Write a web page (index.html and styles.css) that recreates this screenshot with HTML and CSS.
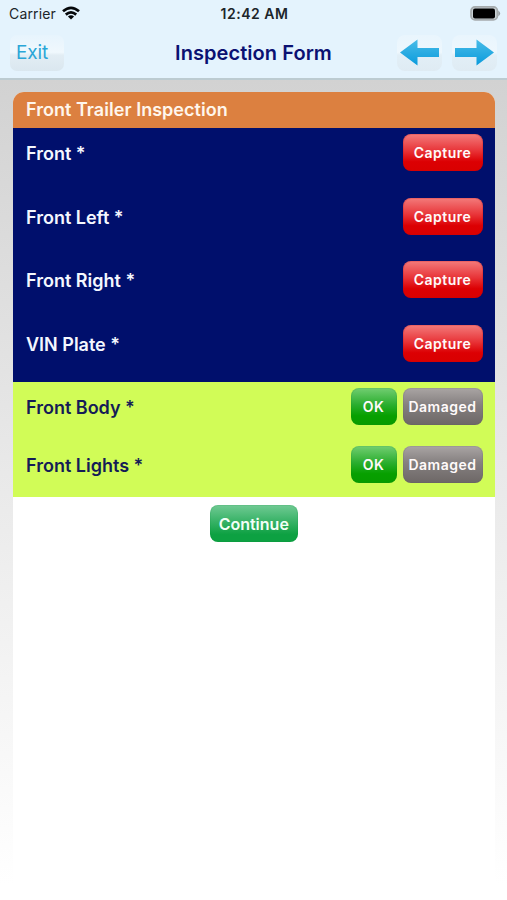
FILE: index.html
```html
<!DOCTYPE html>
<html lang="en">
<head>
<meta charset="utf-8">
<title>Inspection Form</title>
<link rel="stylesheet" href="styles.css">
</head>
<body>
<header class="top">
  <div class="status">
    <div class="carrier"><span>Carrier</span>
      <svg width="18" height="14" viewBox="0 0 18 14" fill="none" stroke="#05070a" stroke-width="2.7"><path d="M1 5.3Q9-1.7 17 5.3M3.8 8.6Q9 4.2 14.2 8.6"/><path d="M9 13.6 5.9 10.6Q9 8 12.1 10.6Z" fill="#05070a" stroke="none"/></svg>
    </div>
    <div class="clock">12:42 AM</div>
    <div class="battery">
      <svg width="31" height="15" viewBox="0 0 31 15"><rect x="1" y=".9" width="26.4" height="13" rx="4" fill="#c9d1d4" stroke="#a5abad" stroke-width="1.7"/><rect x="3" y="2.6" width="22" height="9.8" rx="2" fill="#000"/><path d="M28.3 4.5Q32 7.4 28.3 10.3Z" fill="#989fa2"/></svg>
    </div>
  </div>
  <nav class="nav">
    <button class="exit">Exit</button>
    <h1 class="title">Inspection Form</h1>
    <div class="arrows">
      <button class="arrow" aria-label="Previous"><svg width="45" height="36" viewBox="0 0 45 36"><defs><linearGradient id="blue" x2="0" y2="1"><stop stop-color="#4abce8"/><stop offset="1" stop-color="#0a9bdc"/></linearGradient></defs><path d="M3 17.5 20.5 4.5V13H42V22H20.5V30.5Z" fill="url(#blue)"/></svg></button>
      <button class="arrow" aria-label="Next"><svg width="45" height="36" viewBox="0 0 45 36"><path d="M42 17.5 24.5 4.5V13H3V22H24.5V30.5Z" fill="url(#blue)"/></svg></button>
    </div>
  </nav>
</header>
<main class="page">
  <section class="card">
    <h2 class="heading">Front Trailer Inspection</h2>
    <div class="photos">
      <div class="row"><span class="label">Front *</span><button class="btn red">Capture</button></div>
      <div class="row"><span class="label">Front Left *</span><button class="btn red">Capture</button></div>
      <div class="row"><span class="label">Front Right *</span><button class="btn red">Capture</button></div>
      <div class="row"><span class="label">VIN Plate *</span><button class="btn red">Capture</button></div>
    </div>
    <div class="checks">
      <div class="row"><span class="label">Front Body *</span><button class="btn green">OK</button><button class="btn gray">Damaged</button></div>
      <div class="row"><span class="label">Front Lights *</span><button class="btn green">OK</button><button class="btn gray">Damaged</button></div>
    </div>
    <button class="btn continue">Continue</button>
  </section>
</main>
</body>
</html>
```
FILE: styles.css
```css
* { box-sizing: border-box; }
body {
  margin: 0;
  height: 900px;
  display: flex;
  flex-direction: column;
  overflow: hidden;
  font-family: Inter, "Liberation Sans", sans-serif;
}
button { border: 0; margin: 0; padding: 0; font-family: inherit; }
h1, h2 { margin: 0; }
.top {
  height: 80px;
  flex: none;
  background: #e4f3fd;
  border-bottom: 2px solid #bccbd1;
}
.status {
  height: 27px;
  display: grid;
  grid-template-columns: 1fr auto 1fr;
  align-items: center;
  padding: 0 7px 0 9px;
  color: #1c252a;
  font-size: 14px;
}
.carrier { display: flex; align-items: center; gap: 6px; letter-spacing: .15px; }
.carrier svg { margin-top: -1px; }
.clock { font-weight: 600; letter-spacing: .5px; }
.battery { display: flex; justify-content: flex-end; }
.battery svg { display: block; margin: -1px -1px 0 0; }
.nav {
  height: 51px;
  display: grid;
  grid-template-columns: 1fr auto 1fr;
  align-items: center;
  padding: 0 10px;
}
.exit {
  width: 54px;
  height: 36px;
  padding-left: 6px;
  text-align: left;
  border-radius: 7px;
  background: linear-gradient(#e7f4fd, #f0f8fd 48%, #e2edf4 56%, #dae7ef);
  color: #2aa6d7;
  font-size: 19px;
  letter-spacing: -.1px;
}
.title { color: #0a1172; font-size: 20px; font-weight: 600; line-height: 28px; letter-spacing: .06px; }
.arrows { display: flex; justify-content: flex-end; gap: 10px; }
.arrow {
  width: 45px;
  height: 36px;
  border-radius: 8px;
  background: linear-gradient(#e9f5fd, #eef7fd 48%, #e2eff7 56%, #dfebf3);
}
.arrow svg { display: block; }
.page {
  flex: 1;
  min-height: 0;
  padding: 11.5px 12.5px 0 13px;
  background: linear-gradient(#d2d2d2, #e9e9e9 48%, #fff 98%);
}
.card {
  height: 100%;
  border-radius: 11px 11px 0 0;
  overflow: hidden;
  background: #fff;
}
.heading {
  height: 36.5px;
  padding-left: 13px;
  background: #dc8040;
  color: #fff6ec;
  font-size: 18px;
  font-weight: 600;
  line-height: 36px;
  letter-spacing: .03px;
}
.photos { background: #000f6c; color: #f4f7ff; }
.checks { background: #d1fc57; color: #151c56; }
.row {
  display: flex;
  align-items: flex-start;
  gap: 6px;
  padding: 6px 12px 0 13px;
}
.photos .row { height: 63.5px; }
.checks .row { height: 57.5px; }
.label { flex: 1; font-size: 18px; font-weight: 600; line-height: 40px; }
.btn {
  height: 37px;
  border-radius: 8px;
  color: #fffafa;
  font-size: 14px;
  font-weight: 600;
  letter-spacing: .5px;
}
.red { width: 80px; background: linear-gradient(#f37b7b, #e83438 45%, #dc0003 75%, #d90000); box-shadow: inset 0 0 0 1px #c5000a30; }
.green { width: 46px; background: linear-gradient(#72ce72, #2bae2f 45%, #07a000 75%, #079b00); box-shadow: inset 0 0 0 1px #17852020; }
.gray { width: 80px; background: linear-gradient(#aaa5a4, #858080 45%, #6d6766); box-shadow: inset 0 0 0 1px #625d5d28; }
.continue {
  display: block;
  width: 88px;
  margin: 8px auto 0;
  background: linear-gradient(#71ca94, #37b266 45%, #0da142 80%);
  box-shadow: inset 0 0 0 1px #0b8a3820;
  color: #f2fff6;
  font-size: 16px;
  letter-spacing: 0;
}
```
